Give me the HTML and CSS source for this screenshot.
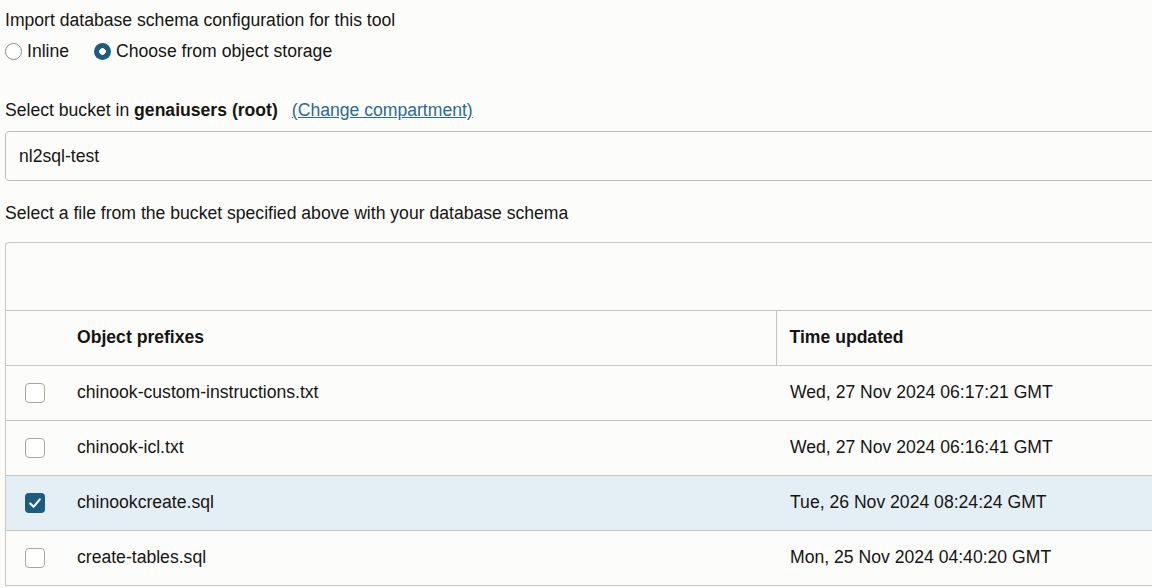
FILE: index.html
```html
<!DOCTYPE html>
<html>
<head>
<meta charset="utf-8">
<link rel="stylesheet" href="styles.css">
</head>
<body>
<div class="page">
  <div class="label">Import database schema configuration for this tool</div>
  <div class="radios">
    <label class="radio"><span class="circle"></span>Inline</label>
    <label class="radio"><span class="circle on"></span>Choose from object storage</label>
  </div>

  <div class="label bucket">Select bucket in <b>genaiusers (root)</b><a class="link" href="#">(Change compartment)</a></div>
  <div class="input">nl2sql-test</div>

  <div class="label filelabel">Select a file from the bucket specified above with your database schema</div>

  <div class="table">
    <div class="toolbar"></div>
    <table>
      <thead>
        <tr><th class="sel"></th><th class="name">Object prefixes</th><th class="time">Time updated</th></tr>
      </thead>
      <tbody>
        <tr><td class="sel"><span class="cb"></span></td><td>chinook-custom-instructions.txt</td><td class="time">Wed, 27 Nov 2024 06:17:21 GMT</td></tr>
        <tr><td class="sel"><span class="cb"></span></td><td>chinook-icl.txt</td><td class="time">Wed, 27 Nov 2024 06:16:41 GMT</td></tr>
        <tr class="selected"><td class="sel"><span class="cb checked"><svg viewBox="0 0 20 20" width="20" height="20"><path d="M5.2 10.4 L8.6 13.8 L14.8 6.4" fill="none" stroke="#fff" stroke-width="2.1" stroke-linecap="round" stroke-linejoin="round"/></svg></span></td><td>chinookcreate.sql</td><td class="time">Tue, 26 Nov 2024 08:24:24 GMT</td></tr>
        <tr><td class="sel"><span class="cb"></span></td><td>create-tables.sql</td><td class="time">Mon, 25 Nov 2024 04:40:20 GMT</td></tr>
      </tbody>
    </table>
  </div>
</div>
</body>
</html>
```
FILE: styles.css
```css
html, body {
  margin: 0;
  padding: 0;
  background: #fcfcfb;
}
body {
  font-family: "Liberation Sans", Arial, sans-serif;
  font-size: 17.6px;
  color: #161513;
  overflow: hidden;
}
.page {
  padding: 8px 0 0 5px;
  width: 1200px;
}
.label {
  line-height: 24px;
  height: 24px;
  white-space: nowrap;
}
.radios {
  display: flex;
  align-items: center;
  gap: 25px;
  height: 24px;
  margin-top: 7px;
}
.radio {
  display: flex;
  align-items: center;
  gap: 5px;
}
.circle {
  width: 15px;
  height: 15px;
  border: 1px solid #8b8a87;
  border-radius: 50%;
  background: #fff;
  box-sizing: content-box;
}
.circle.on {
  width: 17px;
  height: 17px;
  border: none;
  background: radial-gradient(circle, #fff 0 3px, #1e5b83 3.6px);
}
.bucket {
  margin-top: 35px;
}
.bucket b {
  font-weight: bold;
}
.link {
  color: #2a6a94;
  margin-left: 14px;
  text-decoration: underline;
}
.input {
  margin-top: 9px;
  height: 50px;
  border: 1px solid #bfbcb8;
  border-radius: 4px;
  box-sizing: border-box;
  padding-left: 13px;
  line-height: 48px;
  background: #fcfcfb;
}
.filelabel {
  margin-top: 20px;
}
.table {
  margin-top: 17px;
  border: 1px solid #c9c6c2;
  border-right: none;
  border-bottom: none;
  border-radius: 4px 0 0 0;
}
.toolbar {
  height: 67px;
  border-bottom: 1px solid #c9c6c2;
}
table {
  border-collapse: collapse;
  width: 100%;
}
th, td {
  height: 55px;
  padding: 0;
  text-align: left;
  border-bottom: 1px solid #c9c6c2;
  box-sizing: border-box;
  white-space: nowrap;
}
th {
  font-weight: bold;
  height: 54px;
}
th.sel, td.sel {
  width: 71px;
  padding-left: 19px;
}
th.time {
  border-left: 1px solid #c9c6c2;
  padding-left: 13px;
}
td.time {
  padding-left: 14px;
}
th.name {
  width: 699px;
}
.cb {
  display: block;
  width: 20px;
  height: 20px;
  border: 1px solid #a9a6a2;
  border-radius: 4px;
  box-sizing: border-box;
  background: #fff;
}
.cb.checked {
  border: none;
  background: #1e5b83;
}
.cb svg {
  display: block;
}
tr.selected td {
  background: #e4eff5;
}
```
